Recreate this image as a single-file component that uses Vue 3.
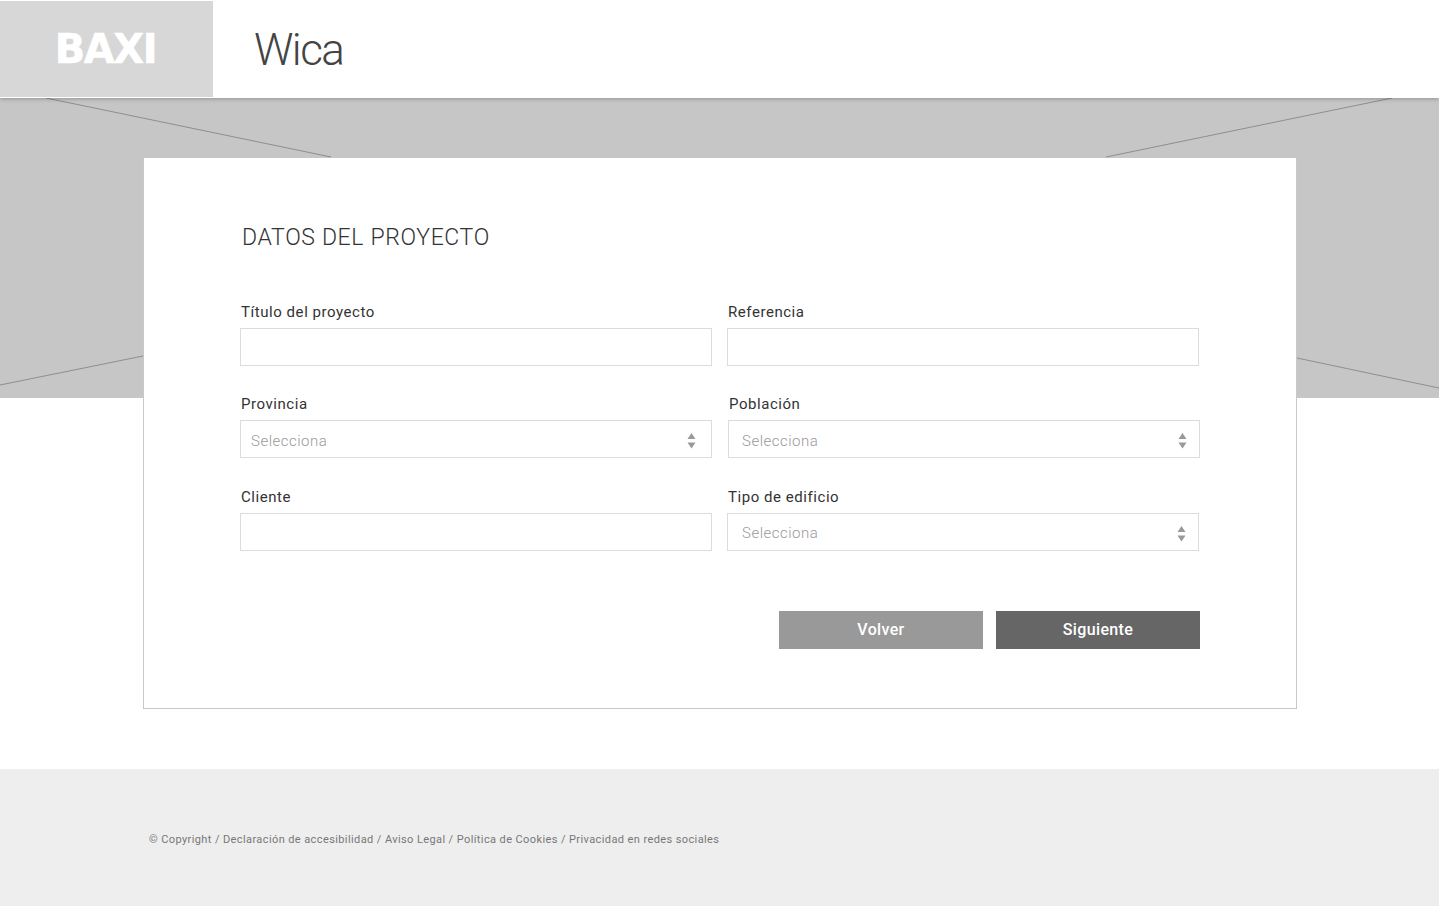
<script setup>
const rows = [
  [
    { label: 'Título del proyecto', type: 'input' },
    { label: 'Referencia', type: 'input' },
  ],
  [
    { label: 'Provincia', type: 'select', cls: 'sel-left' },
    { label: 'Población', type: 'select', cls: 'sel-mid shifted' },
  ],
  [
    { label: 'Cliente', type: 'input' },
    { label: 'Tipo de edificio', type: 'select', cls: 'sel-right' },
  ],
]
const links = ['© Copyright', 'Declaración de accesibilidad', 'Aviso Legal', 'Política de Cookies', 'Privacidad en redes sociales']
</script>

<template>
  <div class="page">
    <header class="header">
      <div class="logo-cell"><span class="logo">BAXI</span></div>
      <h1 class="app-name">Wica</h1>
    </header>

    <div class="hero">
      <svg class="hero-lines" width="1439" height="300" viewBox="0 0 1439 300" aria-hidden="true">
        <path d="M46 0L331 59M1392 0L1106 59M0 287L143 258M1297 260L1439 290" fill="none" stroke="#8e8e8e" stroke-width="1" />
      </svg>
    </div>

    <main class="card">
      <h2 class="card-title">DATOS DEL PROYECTO</h2>
      <form class="form" @submit.prevent>
        <div v-for="(row, i) in rows" :key="i" class="row" :class="{ 'row-last': i === 2 }">
          <div v-for="f in row" :key="f.label" class="field" :class="f.cls">
            <label class="label">{{ f.label }}</label>
            <input v-if="f.type === 'input'" class="control" type="text" />
            <div v-else class="select-wrap">
              <select class="control select">
                <option>Selecciona</option>
              </select>
              <svg class="arrows" width="9" height="16" viewBox="0 0 9 16" aria-hidden="true">
                <path d="M4.5 0L8.500 6H.5zM.5 9.500h8L4.500 15.500z" fill="#999" />
              </svg>
            </div>
          </div>
        </div>
        <div class="actions">
          <button type="button" class="btn btn-back">Volver</button>
          <button type="submit" class="btn btn-next">Siguiente</button>
        </div>
      </form>
    </main>

    <footer class="footer">
      <p class="legal">
        <template v-for="(l, i) in links" :key="l">
          <span v-if="i"> / </span>{{ l }}
        </template>
      </p>
    </footer>
  </div>
</template>

<style>
html, body { margin: 0; background: #fff; }
</style>

<style scoped>
.page {
  width: 1439px;
  height: 906px;
  overflow: hidden;
  font-family: Roboto, "Liberation Sans", sans-serif;
  background: #fff;
}
.header {
  position: relative;
  z-index: 2;
  box-sizing: border-box;
  height: 98px;
  padding-top: 1px;
  display: flex;
  align-items: stretch;
  background: #fff;
  box-shadow: 0 1px 4px rgba(0, 0, 0, .25);
}
.logo-cell {
  width: 213px;
  height: 96px;
  background: #d7d7d7;
  display: flex;
  align-items: center;
  justify-content: center;
}
.logo {
  font-family: "DejaVu Sans", sans-serif;
  font-weight: 700;
  font-size: 40px;
  letter-spacing: -1.4px;
  color: #fff;
  -webkit-text-stroke: .5px #fff;
  line-height: 1;
  margin-right: 2px;
}
.app-name {
  margin: 0 0 0 41px;
  font-size: 44px;
  font-weight: 300;
  letter-spacing: -1.6px;
  line-height: 98px;
  color: #444;
}
.hero {
  position: relative;
  height: 300px;
  background: #c6c6c6;
}
.hero-lines {
  position: absolute;
  left: 0;
  top: 0;
}
.card {
  position: relative;
  box-sizing: border-box;
  width: 1154px;
  height: 551px;
  margin: -240px 0 0 143px;
  padding: 62px 96px 0;
  background: #fff;
  border: 1px solid #c8c8c8;
  border-top: 0;
}
.card-title {
  margin: 0 0 0 2px;
  font-size: 23px;
  font-weight: 300;
  letter-spacing: .65px;
  line-height: 36px;
  color: #333;
}
.form { margin-top: 45px; }
.row {
  display: flex;
  gap: 15px;
  margin-bottom: 27px;
}
.row-last { margin-top: 28px; }
.field {
  width: 472px;
  flex: none;
}
.shifted { margin-left: 1px; margin-right: -1px; }
.label {
  display: block;
  height: 27px;
  padding-left: 1px;
  font-size: 15px;
  font-weight: 400;
  letter-spacing: .55px;
  line-height: 22px;
  color: #333;
}
.control {
  display: block;
  box-sizing: border-box;
  width: 100%;
  height: 38px;
  margin: 0;
  border: 1px solid #dcdcdc;
  border-radius: 0;
  background: #fff;
  outline: none;
  font-family: inherit;
}
.select-wrap { position: relative; }
.select {
  appearance: none;
  padding: 4px 0 0 10px;
  font-size: 15px;
  font-weight: 300;
  letter-spacing: .5px;
  color: #999;
}
.sel-mid .select { padding-left: 13px; }
.sel-right .select { padding: 2px 0 0 14px; }
.arrows {
  position: absolute;
  top: 13px;
  right: 16px;
  pointer-events: none;
}
.sel-mid .arrows, .sel-right .arrows { right: 13px; }
.actions {
  display: flex;
  justify-content: flex-end;
  gap: 13px;
  width: 960px;
  margin-top: 60px;
}
.btn {
  width: 204px;
  height: 38px;
  border: 0;
  padding: 0 0 2px;
  font-family: inherit;
  font-size: 16px;
  font-weight: 500;
  letter-spacing: .35px;
  color: #fff;
}
.btn-back { background: #999; }
.btn-next { background: #666; }
.footer {
  box-sizing: border-box;
  height: 137px;
  margin-top: 60px;
  padding: 63px 0 0 149px;
  background: #eee;
}
.legal {
  margin: 0;
  font-size: 11px;
  font-weight: 400;
  letter-spacing: .4px;
  line-height: 16px;
  color: #777;
}
</style>
